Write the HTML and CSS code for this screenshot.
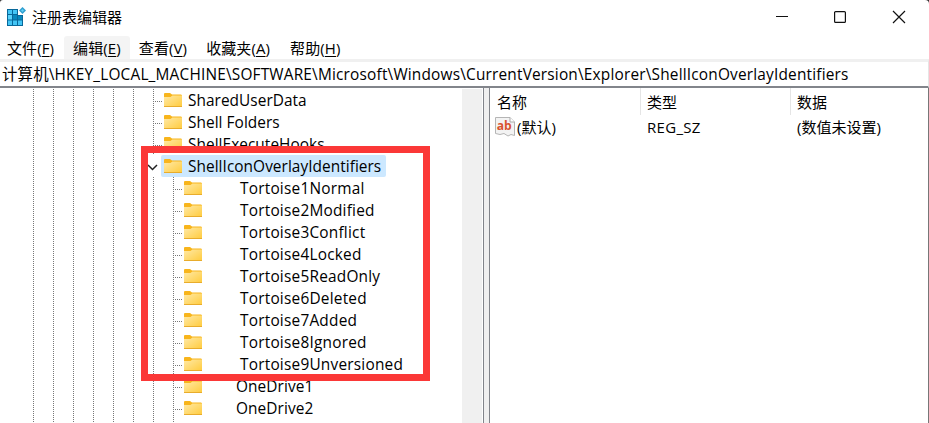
FILE: index.html
```
<!DOCTYPE html>
<html lang="zh-CN">
<head>
<meta charset="utf-8">
<title>注册表编辑器</title>
<link rel="stylesheet" href="styles.css">
</head>
<body>
<svg width="0" height="0" class="defs">
  <defs>
    <linearGradient id="gold" x1="0" y1="0" x2="1" y2="1"><stop offset="0" stop-color="#ffe9a6"/><stop offset="1" stop-color="#ffcb3d"/></linearGradient>
    <symbol id="folder" viewBox="0 0 18 14">
      <path d="M0 1Q0 0 1 0H6L8 1.500H17Q18 1.500 18 3V7H0z" fill="#f8b51c"/>
      <path d="M0 4H6.500L8.400 2.500H18V14H0z" fill="url(#gold)"/>
      <path d="M0 13H18V14H0z" fill="#e8ac2c"/>
    </symbol>
  </defs>
</svg>
<div class="window">
  <header class="titlebar">
    <svg class="app-icon" width="20" height="20" viewBox="0 0 20 20">
      <path d="M0 2H11V8H16V19H0z" fill="#08689a"/>
      <path d="M1 3H5V7H1zM6 3H10V7H6zM1 13.500H5V18H1zM6 13.500H10V18H6zM11 13.500H15V18H11z" fill="#43c5f5"/>
      <path d="M1 8H5V12.500H1z" fill="#5bd2fa"/><path d="M6 8H10V12.500H6zM11 9H15V12.500H11z" fill="#0788bd"/>
      <path d="M15.500 0L19 3.500L15.500 7L12 3.500z" fill="#2f9fd0"/><path d="M15.500 2L17 3.500L15.500 5L14 3.500z" fill="#63cef5"/>
    </svg>
    <h1>注册表编辑器</h1>
    <svg class="controls" width="130" height="14" viewBox="0 0 130 14" fill="none" stroke="#111" stroke-width="1.2">
      <path d="M0 6.500H12"/><rect x="58.600" y="1.600" width="10.800" height="10.800" rx="1"/><path d="M117 1L129 13M129 1L117 13"/>
    </svg>
  </header>
  <nav class="menu">
    <span>文件(<u>F</u>)</span><span class="hover">编辑(<u>E</u>)</span><span>查看(<u>V</u>)</span><span>收藏夹(<u>A</u>)</span><span>帮助(<u>H</u>)</span>
  </nav>
  <div class="address"><span class="path">计算机\HKEY_LOCAL_MACHINE\SOFTWARE\Microsoft\Windows\CurrentVersion\Explorer\ShellIconOverlayIdentifiers</span></div>
  <main>
    <div class="tree">
      <div class="guides"><i></i><i></i><i></i><i></i><i></i><i></i></div>
      <ul>
        <li><svg class="folder"><use href="#folder"/></svg><span>SharedUserData</span></li>
        <li><svg class="folder"><use href="#folder"/></svg><span>Shell Folders</span></li>
        <li><svg class="folder"><use href="#folder"/></svg><span>ShellExecuteHooks</span></li>
        <li class="open"><svg class="chevron" width="11" height="7" viewBox="0 0 11 7"><path d="M1 1L5.500 5.500L10 1" fill="none" stroke="#222" stroke-width="1.500"/></svg><div class="selected"><svg class="folder"><use href="#folder"/></svg><span>ShellIconOverlayIdentifiers</span></div></li>
        <li class="child"><svg class="folder"><use href="#folder"/></svg><span>Tortoise1Normal</span></li>
        <li class="child"><svg class="folder"><use href="#folder"/></svg><span>Tortoise2Modified</span></li>
        <li class="child"><svg class="folder"><use href="#folder"/></svg><span>Tortoise3Conflict</span></li>
        <li class="child"><svg class="folder"><use href="#folder"/></svg><span>Tortoise4Locked</span></li>
        <li class="child"><svg class="folder"><use href="#folder"/></svg><span>Tortoise5ReadOnly</span></li>
        <li class="child"><svg class="folder"><use href="#folder"/></svg><span>Tortoise6Deleted</span></li>
        <li class="child"><svg class="folder"><use href="#folder"/></svg><span>Tortoise7Added</span></li>
        <li class="child"><svg class="folder"><use href="#folder"/></svg><span>Tortoise8Ignored</span></li>
        <li class="child"><svg class="folder"><use href="#folder"/></svg><span>Tortoise9Unversioned</span></li>
        <li class="child drive"><svg class="folder"><use href="#folder"/></svg><span>OneDrive1</span></li>
        <li class="child drive"><svg class="folder"><use href="#folder"/></svg><span>OneDrive2</span></li>
        <li class="child"></li>
      </ul>
      <div class="scrollbar"></div>
      <div class="highlight"></div>
    </div>
    <div class="splitter"></div>
    <section class="values">
      <div class="row head"><span>名称</span><span>类型</span><span>数据</span></div>
      <div class="row">
        <span class="name"><svg width="20" height="20" viewBox="0 0 20 20"><path d="M.5.500H15L19.500 5V18.500L16 17.500L13 19L9 16.500L5 17.500L.5 16.500z" fill="#f3f3f3" stroke="#b5b5b5"/><path d="M15 .5V5H19.500" fill="#fff" stroke="#aaa"/><text x="1.800" y="13" textLength="15" lengthAdjust="spacingAndGlyphs">ab</text></svg>(默认)</span>
        <span class="type">REG_SZ</span><span>(数值未设置)</span>
      </div>
    </section>
  </main>
</div>
</body>
</html>
```
FILE: styles.css
```
* { box-sizing: border-box; }
body { margin: 0; background: #333; overflow: hidden; }
.defs { position: absolute; }
.window {
  width: 929px; height: 423px; display: flex; flex-direction: column;
  background: #fff; color: #000; overflow: hidden; border-radius: 3px 4px 0 0;
  font: 15px/22px "Open Sans", "Noto Sans CJK SC", sans-serif;
}
.titlebar { height: 36px; display: flex; align-items: center; padding: 0 23px 2px 7px; }
h1 { margin: 0 auto 0 5px; font-size: 15px; font-weight: 400; }
.menu { height: 23px; display: flex; white-space: nowrap; font-size: 15px; line-height: 24px; }
.menu span { padding: 0 9px; letter-spacing: .1px; }
.menu span:first-child { padding-left: 7px; }
.menu .hover { padding: 0 9px; margin: 0 0 0 1px; height: 24px; background: #f4f4f4; border-radius: 3px 3px 0 0; }
.menu span:nth-child(n+4) { padding-left: 10px; }
.menu span:last-child { padding-left: 11px; }
u { text-underline-offset: 2px; text-decoration-thickness: 1px; }
.address {
  height: 29px; border-top: 3px solid #f0f0f0; border-bottom: 2px solid #82858b;
  border-right: 1px solid #e5e5e5; padding-left: 2px; line-height: 25px; white-space: nowrap;
}
.path { font-size: 15.4px; letter-spacing: .19px; }
main { flex: 1; display: flex; min-height: 0; }
.tree { position: relative; width: 483px; display: flex; padding-top: 1px; }
.guides { display: flex; padding-left: 33px; width: 153px; gap: 19px; }
.guides i { width: 1px; height: 336px; background: repeating-linear-gradient(#777 0 1px, #fff 1px 2px); }
ul { list-style: none; margin: 0; padding: 0; width: 309px; font-size: 15.4px; letter-spacing: .05px; }
li {
  height: 22px; display: flex; align-items: center; padding-left: 11px;
  background: repeating-linear-gradient(#777 0 1px, #fff 1px 2px) 0 0 / 1px 22px no-repeat,
    repeating-linear-gradient(90deg, #777 0 1px, #fff 1px 2px) 2px 12px / 8px 1px no-repeat;
}
li span { padding-top: 2px; }
.folder { width: 18px; height: 14px; flex: none; margin-right: 6px; }
li.open { padding: 0; background: none; margin-left: -6px; }
.chevron { margin-top: 3px; margin-right: 3px; }
.selected { width: 225px; height: 22px; display: flex; align-items: center; background: #cce8ff; padding: 0 0 0 3px; border-radius: 2px; }
li.child {
  padding-left: 31px; letter-spacing: .22px;
  background: repeating-linear-gradient(#777 0 1px, #fff 1px 2px) 0 0 / 1px 22px no-repeat,
    repeating-linear-gradient(#777 0 1px, #fff 1px 2px) 20px 0 / 1px 22px no-repeat,
    repeating-linear-gradient(90deg, #777 0 1px, #fff 1px 2px) 22px 12px / 8px 1px no-repeat;
}
.child .folder { margin-right: 38px; }
li.drive { letter-spacing: .1px; }
.drive .folder { margin-right: 34px; }
.scrollbar { width: 20px; background: #f0f0f0; }
.highlight { position: absolute; left: 141px; top: 58px; width: 289px; height: 235px; border: 7px solid #fb3837; }
.splitter { width: 7px; background: #f0f0f0; border: solid #82858b; border-width: 0 1px; }
.values { flex: 1; border-right: 1px solid #777; }
.row { display: grid; grid-template-columns: 151px 150px 1fr; line-height: 24px; }
.row > span { padding-left: 6px; font-size: 15px; }
.row > span:first-child { padding-left: 7px; }
.row > .type { letter-spacing: .3px; }
.head > span { height: 27px; border-right: 1px solid #e5e5e5; padding-top: 2px; }
.head > span:last-child { border: 0; }
.row > .name:first-child { display: flex; align-items: center; padding-left: 5px; gap: 2px; }
.name text { font: bold 13px "Open Sans", sans-serif; fill: #d9532f; }
```
